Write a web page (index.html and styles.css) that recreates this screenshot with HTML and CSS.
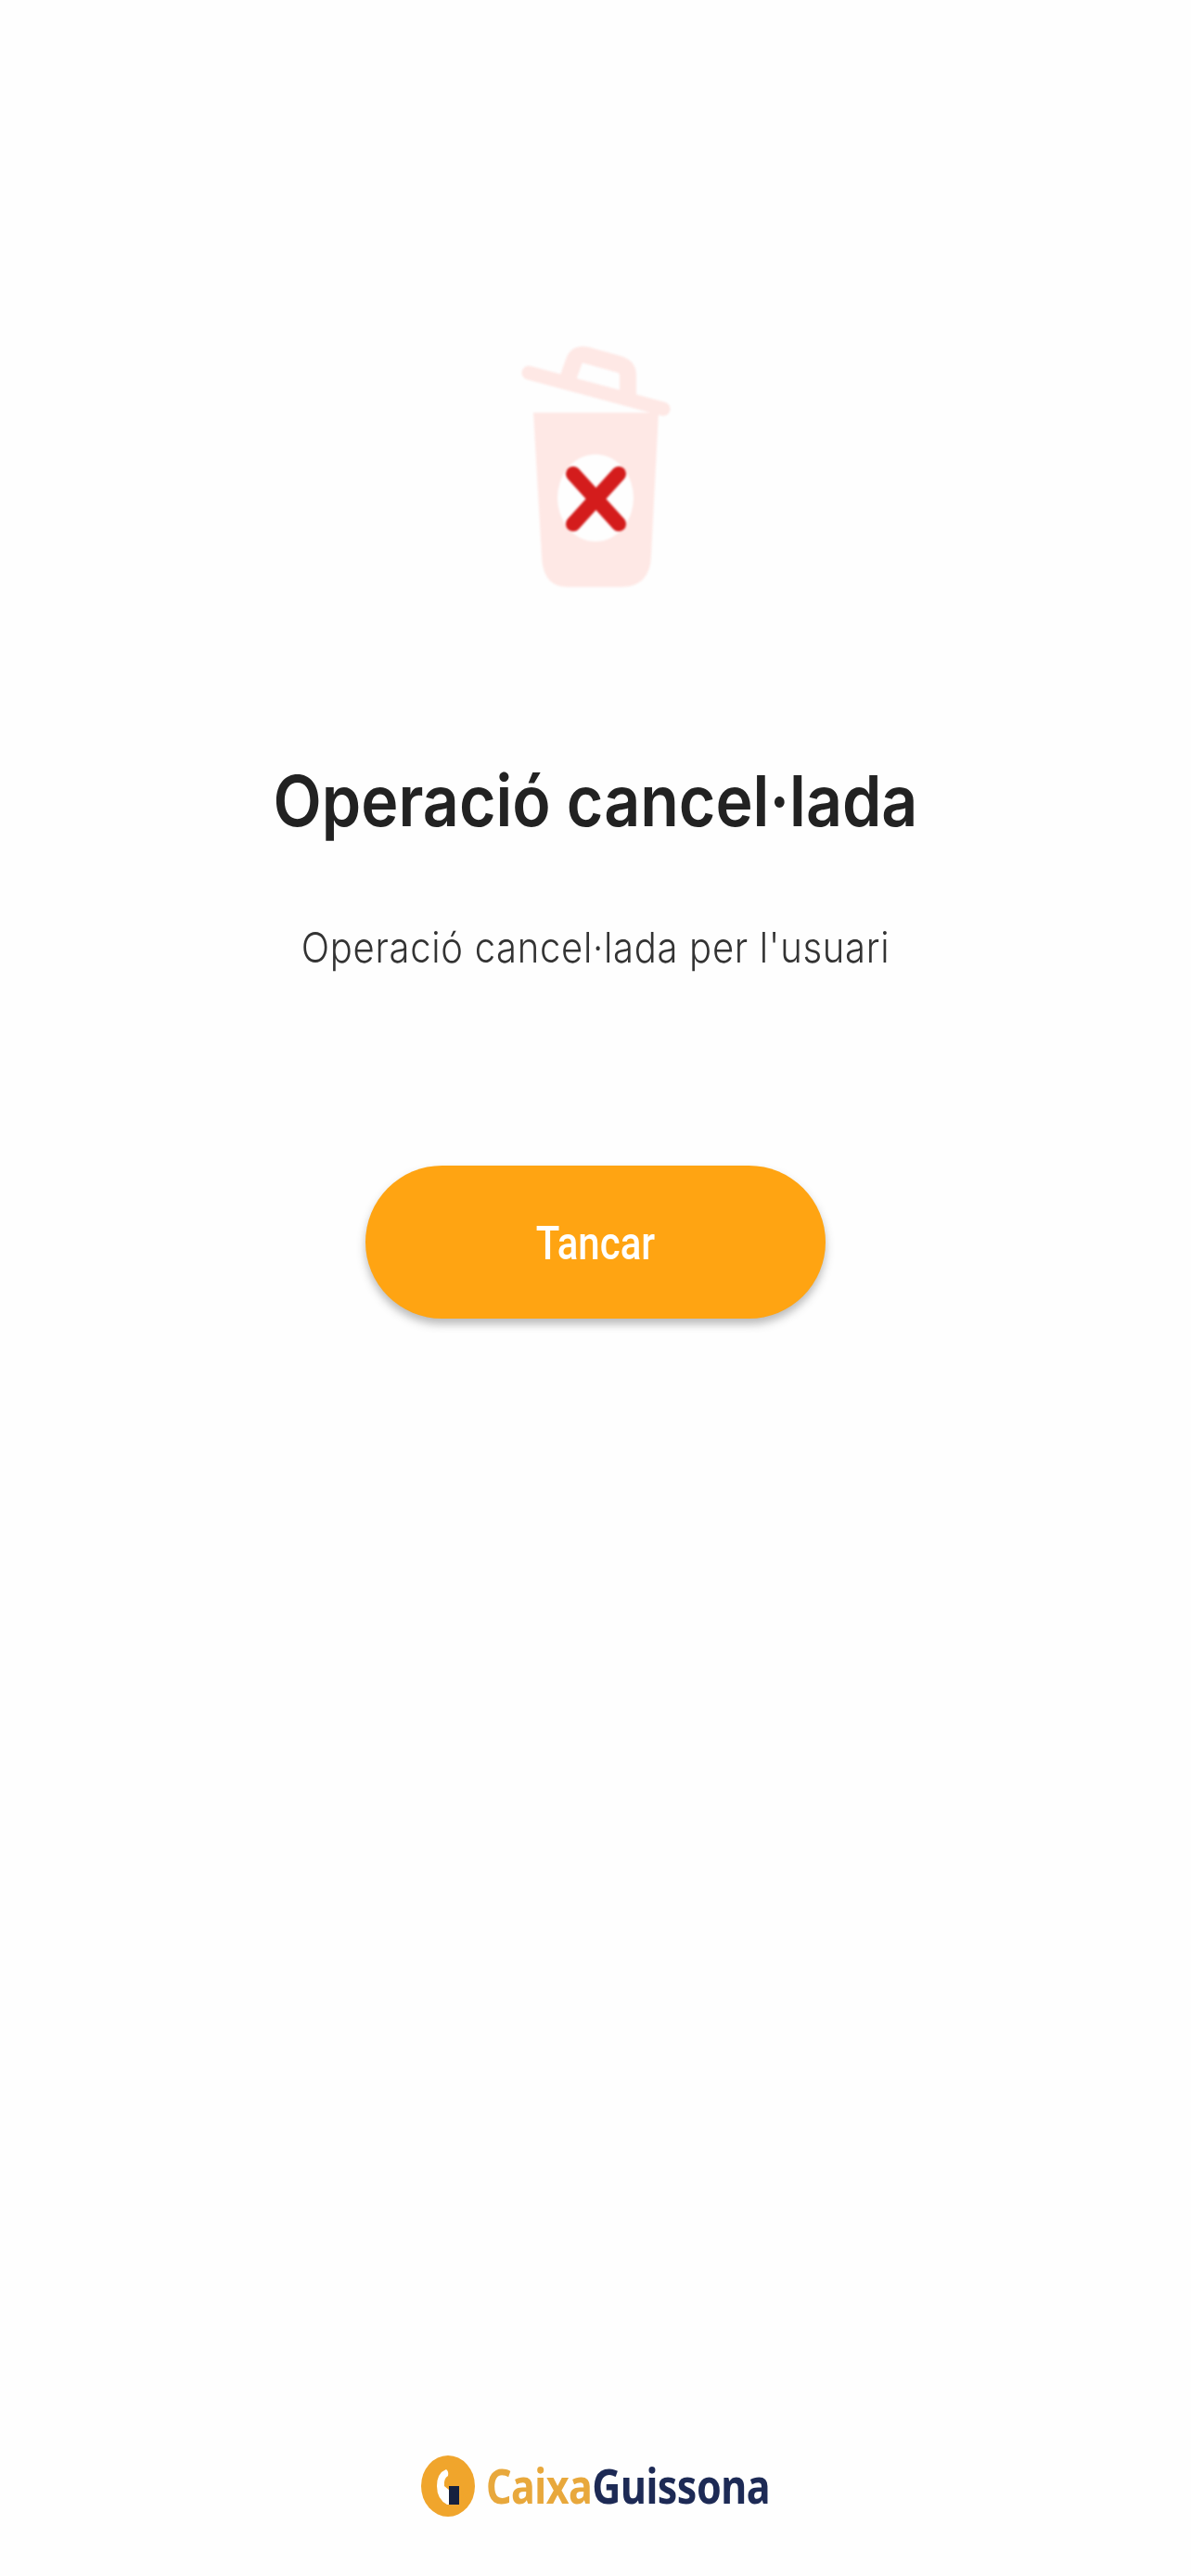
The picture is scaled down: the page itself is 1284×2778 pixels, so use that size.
FILE: index.html
```html
<!DOCTYPE html>
<html lang="en">
<head>
  <meta charset="UTF-8">
  <meta name="viewport" content="width=device-width, initial-scale=1.0">
  <title>Operació cancel·lada</title>
  <link rel="stylesheet" href="styles.css">
</head>
<body>
  <div class="page">
    <svg class="trash-icon" viewBox="0 0 240 300" width="240" height="300">
      <!-- lid -->
      <line x1="50" y1="52" x2="195" y2="91" class="trash-lid"/>
      <path d="M93 56 L99 39 Q102 31 112 33 L148 43 Q157 46 157 55 L157 76" class="trash-handle"/>
      <!-- body -->
      <path d="M55 95 H190 L182 250 C181 272 170 283 150 283 H92 C74 283 65 272 64 250 Z" class="trash-body"/>
      <ellipse cx="122" cy="187" rx="41" ry="47" class="trash-hole"/>
      <line x1="98" y1="161" x2="147" y2="215" class="trash-x"/>
      <line x1="147" y1="161" x2="98" y2="215" class="trash-x"/>
    </svg>

    <h1 class="title">Operació cancel·lada</h1>
    <p class="subtitle">Operació cancel·lada per l'usuari</p>
    <button type="button" class="close-btn"><span>Tancar</span></button>

    <div class="logo">
      <svg class="logo-mark" viewBox="0 0 58 66" width="58" height="66">
        <ellipse cx="29" cy="33" rx="29" ry="33" fill="#f0a52c"/>
        <path d="M27 15 Q17 19 17 33 Q17 47 28 53 L31 53 L31 38 L25 33 Q24 25 29 22 Q30 17 27 15 Z" fill="#fff"/>
        <rect x="30" y="33" width="11" height="20" fill="#16213f"/>
      </svg>
      <span class="logo-text"><span class="logo-caixa">Caixa</span><span class="logo-guissona">Guissona</span></span>
    </div>
  </div>
</body>
</html>
```

FILE: styles.css
```css
* {
  box-sizing: border-box;
}

body {
  margin: 0;
  background-color: #fefefe;
  font-family: Inter, "Liberation Sans", sans-serif;
}

.page {
  height: 2778px;
  display: flex;
  flex-direction: column;
  align-items: center;
  padding-top: 350px;
  padding-bottom: 64px;
}

.trash-icon {
  display: block;
  margin-right: 4px;
  filter: blur(0.8px);
}

.trash-lid,
.trash-handle {
  fill: none;
  stroke: #fee8e5;
  stroke-linecap: round;
  stroke-linejoin: round;
}

.trash-lid {
  stroke-width: 15;
}

.trash-handle {
  stroke-width: 18;
}

.trash-body {
  fill: #fee8e5;
}

.trash-hole {
  fill: #fefefe;
}

.trash-x {
  stroke: #d41c1c;
  stroke-width: 16;
  stroke-linecap: round;
}

.title {
  margin: 163px 0 0;
  height: 100px;
  line-height: 100px;
  font-size: 68px;
  font-weight: 600;
  color: #222222;
  text-align: center;
  transform: scaleY(1.12);
}

.subtitle {
  margin: 79px 0 0;
  height: 60px;
  line-height: 60px;
  font-size: 40px;
  font-weight: 300;
  letter-spacing: 0.7px;
  color: #333333;
  text-align: center;
  transform: scaleY(1.12);
}

.close-btn {
  width: 496px;
  height: 165px;
  margin-top: 205px;
  padding-top: 4px;
  border: none;
  border-radius: 83px;
  background-color: #ffa412;
  box-shadow: 0 6px 10px rgba(60, 60, 60, 0.35);
  color: white;
  font-family: Roboto, sans-serif;
  font-size: 42px;
  font-weight: 500;
  cursor: pointer;
}

.close-btn span {
  display: inline-block;
  transform: scaleY(1.17);
}

.logo {
  margin-top: auto;
  display: flex;
  align-items: center;
  gap: 12px;
}

.logo-mark {
  display: block;
}

.logo-text {
  font-family: "Noto Sans", sans-serif;
  font-size: 43px;
  font-weight: 700;
  line-height: 66px;
  letter-spacing: -0.5px;
  transform: scaleY(1.2);
}

.logo-caixa {
  color: #e8a83c;
}

.logo-guissona {
  color: #1d2a55;
}
```
